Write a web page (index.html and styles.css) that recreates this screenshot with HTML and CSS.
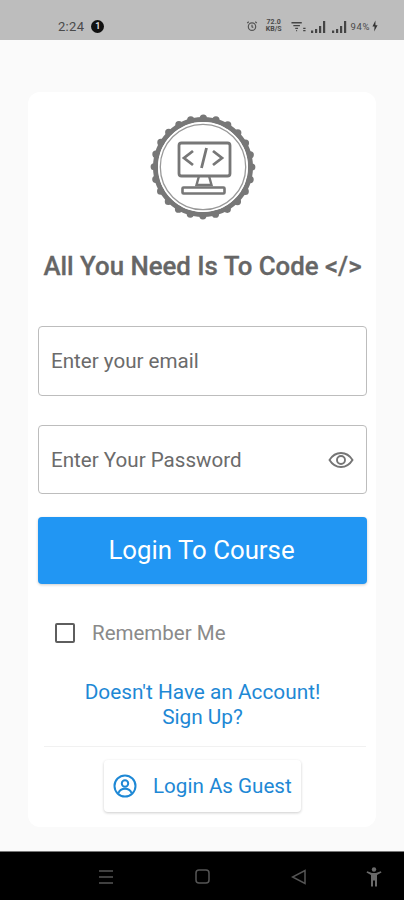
FILE: index.html
```html
<!DOCTYPE html>
<html lang="en">
<head>
    <meta charset="UTF-8">
    <meta name="viewport" content="width=device-width, initial-scale=1.0">
    <title>Login</title>
    <link rel="stylesheet" href="styles.css">
</head>
<body>

    <!-- status bar -->
    <header class="status-bar">
        <span class="clock">2:24</span>
        <span class="notif">1</span>
        <div class="status-icons">
            <svg class="alarm" width="12" height="12" viewBox="0 0 15 14" fill="none" stroke="#555" stroke-width="1.500">
                <circle cx="7.5" cy="7.8" r="4.6"/>
                <path d="M7.500 5.500v2.500l1.600 1M1.500 3.200l2-1.600M13.500 3.200l-2-1.600"/>
            </svg>
            <span class="speed">72.0<br>KB/S</span>
            <svg class="wifi" width="15" height="12" viewBox="0 0 16 12" fill="none" stroke="#444" stroke-width="1.4">
                <path d="M0.500 2.500h11M2.500 5.500h7M4.500 8.500h3M5.500 11h1"/>
                <path d="M13 8.500h2.500M13 11h2.500"/>
            </svg>
            <svg class="signal" width="15" height="13" viewBox="0 0 15 13" fill="#444">
                <rect x="0" y="10.500" width="2.200" height="2.500"/>
                <rect x="4" y="9" width="2.200" height="4"/>
                <rect x="8" y="6" width="2.200" height="7"/>
                <rect x="12" y="1" width="2.200" height="12"/>
            </svg>
            <svg class="signal" width="15" height="13" viewBox="0 0 15 13" fill="#444">
                <rect x="0" y="10.500" width="2.200" height="2.500"/>
                <rect x="4" y="9" width="2.200" height="4"/>
                <rect x="8" y="6" width="2.200" height="7"/>
                <rect x="12" y="1" width="2.200" height="12"/>
            </svg>
            <span class="battery">94%</span>
            <svg class="bolt" width="6" height="12" viewBox="0 0 7 13" fill="#333">
                <path d="M4 0 0.500 7H3L2.500 13 6.500 5.500H4Z"/>
            </svg>
        </div>
    </header>

    <main class="content">
        <div class="login-card">
            <svg class="logo" width="108" height="108" viewBox="-1 -1 108 108" fill="none" stroke="#777">
                <!-- scalloped edge: thick ring plus a ring of round dots -->
                <circle cx="53" cy="53" r="48.800" stroke-width="7.200" stroke-linecap="round" stroke-dasharray="0 12.775"/>
                <circle cx="53" cy="53" r="47.500" stroke-width="5"/>
                <circle cx="53" cy="53" r="44.900" fill="#fff" stroke="none"/>
                <circle cx="53" cy="53" r="42.700" stroke-width="1.300" stroke="#999"/>
                <rect x="29" y="29" width="51" height="33" rx="2.500" stroke-width="2.800"/>
                <path d="M43 37 34 44 43 51M63 37 72 44 63 51M56.500 34 51.500 54" stroke-width="2.800"/>
                <path d="M49 62 46.500 71H61.500L59 62" stroke-width="2.400"/>
                <rect x="32.500" y="73.500" width="42" height="6" rx="1" stroke-width="2.600"/>
            </svg>

            <h1 class="title">All You Need Is To Code &lt;/&gt;</h1>

            <div class="field field-email">
                <span class="placeholder">Enter your email</span>
            </div>
            <div class="field field-password">
                <span class="placeholder">Enter Your Password</span>
                <svg class="eye" width="26" height="18" viewBox="0 0 26 18" fill="none" stroke="#757575" stroke-width="1.900">
                    <path d="M1.500 9C4.500 4.200 8.500 2 13 2s8.500 2.200 11.500 7C21.500 13.800 17.500 16 13 16S4.500 13.800 1.500 9Z"/>
                    <circle cx="13" cy="9" r="4"/>
                </svg>
            </div>

            <button class="login-btn">Login To Course</button>

            <label class="remember">
                <span class="checkbox"></span>
                <span>Remember Me</span>
            </label>

            <a class="signup-link">Doesn't Have an Account!<br>Sign Up?</a>

            <div class="divider"></div>

            <button class="guest-btn">
                <svg width="24" height="24" viewBox="0 0 24 24" fill="none" stroke="#1e88d5" stroke-width="2">
                    <circle cx="12" cy="12" r="10.500"/>
                    <circle cx="12" cy="9.500" r="3.200"/>
                    <path d="M5.500 19c1-3 3.500-4.300 6.500-4.300s5.500 1.300 6.500 4.300"/>
                </svg>
                <span>Login As Guest</span>
            </button>
        </div>
    </main>

    <!-- navigation bar -->
    <footer class="nav-bar">
        <svg class="nav-menu" width="16" height="16" viewBox="0 0 16 16" stroke="#555" stroke-width="1.500">
            <path d="M1 2h14M1 8h14M1 14h14"/>
        </svg>
        <svg class="nav-home" width="15" height="15" viewBox="0 0 15 15" fill="none" stroke="#555" stroke-width="1.500">
            <rect x="1" y="1" width="13" height="13" rx="3"/>
        </svg>
        <svg class="nav-back" width="15" height="16" viewBox="0 0 15 16" fill="none" stroke="#555" stroke-width="1.500">
            <path d="M14 1.500V14.500L1.500 8Z"/>
        </svg>
        <svg class="nav-access" width="16" height="20" viewBox="0 0 16 20" fill="#6a6a6a">
            <circle cx="8" cy="2.500" r="2.200"/>
            <path d="M0.500 5.500 1.200 4.300 6 6H10L14.800 4.300 15.500 5.500 11 8V19.500H9V13.500H7V19.500H5V8Z"/>
        </svg>
    </footer>

</body>
</html>
```

FILE: styles.css
```css
body {
    font-family: Roboto, "Liberation Sans", sans-serif;
    background-color: #fafafa;
    margin: 0;
    padding: 0;
    width: 404px;
    height: 900px;
    display: flex;
    flex-direction: column;
    overflow: hidden;
}
.status-bar {
    height: 40px;
    box-sizing: border-box;
    background-color: #bdbdbd;
    display: flex;
    align-items: center;
    padding: 16px 26px 4px 58px;
    color: #4a4a4a;
    flex-shrink: 0;
}
.clock {
    font-size: 13px;
    letter-spacing: 0.3px;
}
.notif {
    width: 13px;
    height: 13px;
    border-radius: 50%;
    background-color: #111;
    color: #ddd;
    font-size: 9px;
    font-weight: bold;
    line-height: 13px;
    text-align: center;
    margin-left: 7px;
}
.status-icons {
    margin-left: auto;
    display: flex;
    align-items: center;
}
.speed {
    font-size: 7px;
    line-height: 7px;
    font-weight: bold;
    text-align: center;
    margin-left: 8px;
}
.wifi {
    margin-left: 9px;
}
.signal {
    margin-left: 5px;
}
.signal + .signal {
    margin-left: 6px;
}
.battery {
    font-size: 9.500px;
    margin-left: 4px;
    letter-spacing: 0.6px;
}
.bolt {
    margin-left: 2px;
}
.content {
    flex: 1;
    padding: 52px 28px 24px;
    min-height: 0;
}
.login-card {
    background-color: white;
    border-radius: 12px;
    height: 735px;
    box-sizing: border-box;
    padding: 21px 9px 0 10px;
    display: flex;
    flex-direction: column;
    align-items: center;
}
.logo {
    flex-shrink: 0;
}
.title {
    font-size: 25.800px;
    font-weight: 500;
    -webkit-text-stroke: 0.3px #666;
    color: #666;
    margin: 29px 0 0;
    line-height: 32px;
    white-space: nowrap;
}
.field {
    width: 100%;
    box-sizing: border-box;
    border: 1.500px solid #bdbdbd;
    border-radius: 4px;
    display: flex;
    align-items: center;
    justify-content: space-between;
    padding: 0 12px 0 12px;
    background-color: white;
}
.field-email {
    height: 70px;
    margin-top: 44px;
}
.field-password {
    height: 69px;
    margin-top: 29px;
}
.placeholder {
    font-size: 20.600px;
    color: #6b6b6b;
}
.login-btn {
    width: 100%;
    height: 67px;
    margin-top: 23px;
    padding: 0 2px 2px 0;
    flex-shrink: 0;
    background-color: #2196f3;
    color: white;
    border: none;
    border-radius: 4px;
    font-family: inherit;
    font-size: 25.800px;
    box-shadow: 0px 1px 3px rgba(0, 0, 0, 0.2);
}
.remember {
    align-self: flex-start;
    display: flex;
    align-items: center;
    gap: 17px;
    margin: 37px 0 0 17px;
    font-size: 20.500px;
    color: #8a8a8a;
}
.checkbox {
    width: 20px;
    height: 20px;
    box-sizing: border-box;
    border: 2.500px solid #5e5e5e;
    border-radius: 2px;
}
.signup-link {
    font-size: 20.800px;
    line-height: 25px;
    color: #1e88d5;
    text-align: center;
    margin-top: 35px;
}
.divider {
    width: 322px;
    height: 1px;
    background-color: #f1f1f1;
    margin: 16px 0 0 4px;
    flex-shrink: 0;
}
.guest-btn {
    width: 197px;
    height: 52px;
    margin-top: 13px;
    flex-shrink: 0;
    background-color: white;
    border: none;
    border-radius: 4px;
    box-shadow: 0px 1px 3px rgba(0, 0, 0, 0.2);
    display: flex;
    align-items: center;
    gap: 16px;
    padding: 0 0 0 9px;
    font-family: inherit;
    font-size: 20.600px;
    color: #1e88d5;
}
.nav-bar {
    height: 49px;
    flex-shrink: 0;
    box-sizing: border-box;
    background-color: black;
    border-top: 1px solid #777;
    position: relative;
}
.nav-bar svg {
    position: absolute;
}
.nav-menu {
    left: 98px;
    top: 17px;
}
.nav-home {
    left: 195px;
    top: 17px;
}
.nav-back {
    left: 291px;
    top: 17px;
}
.nav-access {
    left: 366px;
    top: 15px;
}
```
